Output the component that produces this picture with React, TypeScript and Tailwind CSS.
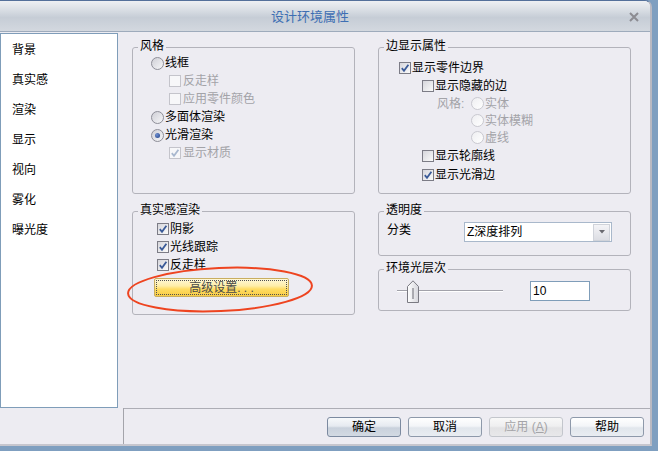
import React from "react";

const BG = "bg-[#edecf2]";

function Radio({ checked = false, disabled = false }: { checked?: boolean; disabled?: boolean }) {
  return (
    <span
      className={
        disabled
          ? "flex h-[13px] w-[13px] shrink-0 items-center justify-center rounded-full border border-[#c9c9d0] bg-[linear-gradient(135deg,#eeeef1,#ffffff)]"
          : "flex h-[13px] w-[13px] shrink-0 items-center justify-center rounded-full border border-[#8e8e98] bg-[linear-gradient(135deg,#cfcfd6,#f6f6f8)]"
      }
    >
      {checked && <span className="h-[5px] w-[5px] rounded-full bg-[radial-gradient(circle_at_35%_35%,#6f8fd0,#1f3f86)]" />}
    </span>
  );
}

function Check({ checked = false, disabled = false }: { checked?: boolean; disabled?: boolean }) {
  return (
    <span
      className={
        disabled
          ? "flex h-[12px] w-[12px] shrink-0 items-center justify-center border border-[#c4c4cb] bg-[#f7f7f9]"
          : "flex h-[12px] w-[12px] shrink-0 items-center justify-center border border-[#7c7c86] bg-[linear-gradient(135deg,#d6d6dc,#fafafa)]"
      }
    >
      {checked && (
        <svg width="10" height="10" viewBox="0 0 10 10">
          <path
            d="M1.8 5.2 L4 7.8 L8.4 1.8"
            fill="none"
            stroke={disabled ? "#a9b8cf" : "#3a5a98"}
            strokeWidth="1.8"
          />
        </svg>
      )}
    </span>
  );
}

function Group({
  title,
  className,
  children,
}: {
  title: string;
  className: string;
  children?: React.ReactNode;
}) {
  return (
    <div className={`relative rounded-[3px] border border-[#b3b3bb] ${className}`}>
      <span className={`absolute left-[5px] top-[-10px] px-[2px] leading-[16px] ${BG}`}>{title}</span>
      {children}
    </div>
  );
}

const nav = ["背景", "真实感", "渲染", "显示", "视向", "雾化", "曝光度"];

export default function App() {
  return (
    <div className="relative h-[451px] w-[658px] overflow-hidden bg-[#7f9fc0] font-[family-name:'Liberation_Sans','Noto_Sans_CJK_SC',sans-serif] text-[12px] text-black">
      <div
        className={`flex h-[446px] w-[652px] flex-col overflow-hidden rounded-tr-[7px] border-t border-r-2 border-b-2 border-t-[#54709a] border-r-[#b9b9c2] border-b-[#c6c6ce] ${BG}`}
      >
        {/* title bar */}
        <div className="flex h-[31px] shrink-0 items-center border-b border-[#9eabbc] bg-[linear-gradient(to_bottom,#eef0f3_0%,#d9dee4_30%,#c6cdd6_55%,#d3d8df_100%)] pt-[2px]">
          <div className="flex-1 text-center text-[13px] leading-[16px] text-[#3e6fb3]">设计环境属性</div>
          <div className="flex w-[30px] justify-center pr-[2px]">
            <svg width="10" height="10" viewBox="0 0 10 10">
              <path d="M1 1 L9 9 M9 1 L1 9" stroke="#8c8c92" strokeWidth="2" />
            </svg>
          </div>
        </div>

        {/* body */}
        <div className="flex h-[376px] shrink-0">
          <div className="mt-[1px] h-[375px] w-[118px] shrink-0 border border-[#7f9db9] bg-white pt-[1px]">
            {nav.map((n) => (
              <div key={n} className="h-[30px] pl-[11px] leading-[30px]">
                {n}
              </div>
            ))}
          </div>

          <div className="flex gap-[23px] pl-[14px] pt-[15px]">
            {/* left column */}
            <div className="flex w-[223px] flex-col gap-[17px]">
              <Group title="风格" className="h-[147px] pl-[18px] pt-[6px]">
                <div className="flex h-[18px] items-center gap-[1px]">
                  <Radio />
                  <span>线框</span>
                </div>
                <div className="ml-[18px] flex h-[18px] items-center gap-[2px] text-[#a3a3a8]">
                  <Check disabled />
                  <span>反走样</span>
                </div>
                <div className="ml-[18px] flex h-[18px] items-center gap-[2px] text-[#a3a3a8]">
                  <Check disabled />
                  <span>应用零件颜色</span>
                </div>
                <div className="flex h-[18px] items-center gap-[1px]">
                  <Radio />
                  <span>多面体渲染</span>
                </div>
                <div className="flex h-[18px] items-center gap-[1px]">
                  <Radio checked />
                  <span>光滑渲染</span>
                </div>
                <div className="ml-[18px] flex h-[18px] items-center gap-[2px] text-[#a3a3a8]">
                  <Check checked disabled />
                  <span>显示材质</span>
                </div>
              </Group>

              <Group title="真实感渲染" className="h-[104px] pl-[24px] pt-[8px]">
                <div className="flex h-[18px] items-center gap-[1px]">
                  <Check checked />
                  <span>阴影</span>
                </div>
                <div className="flex h-[18px] items-center gap-[1px]">
                  <Check checked />
                  <span>光线跟踪</span>
                </div>
                <div className="flex h-[18px] items-center gap-[1px]">
                  <Check checked />
                  <span>反走样</span>
                </div>
                <button className="ml-[-3px] mt-[4px] block h-[19px] w-[135px] rounded-[2px] border border-[#c9ae60] bg-[linear-gradient(to_bottom,#fff8d8_0%,#ffeeaa_40%,#ffdc62_60%,#f9cc45_100%)] p-[1px]">
                  <div className="flex h-full w-full items-center justify-center border border-dotted border-[#505050] leading-[14px] text-[#4a4a4a]">
                    高级设置. . .
                  </div>
                </button>
              </Group>
            </div>

            {/* right column */}
            <div className="flex w-[253px] flex-col">
              <Group title="边显示属性" className="h-[147px] pl-[20px] pt-[11px]">
                <div className="flex h-[18px] items-center gap-[1px]">
                  <Check checked />
                  <span>显示零件边界</span>
                </div>
                <div className="ml-[23px] flex h-[18px] items-center gap-[1px]">
                  <Check />
                  <span>显示隐藏的边</span>
                </div>
                <div className="ml-[38px] flex h-[17px] items-center text-[#a3a3a8]">
                  <span className="w-[34px]">风格:</span>
                  <Radio disabled />
                  <span className="ml-[1px]">实体</span>
                </div>
                <div className="ml-[72px] flex h-[17px] items-center gap-[1px] text-[#a3a3a8]">
                  <Radio disabled />
                  <span>实体模糊</span>
                </div>
                <div className="ml-[72px] flex h-[17px] items-center gap-[1px] text-[#a3a3a8]">
                  <Radio disabled />
                  <span>虚线</span>
                </div>
                <div className="ml-[23px] flex h-[19px] items-center gap-[1px]">
                  <Check />
                  <span>显示轮廓线</span>
                </div>
                <div className="ml-[23px] flex h-[19px] items-center gap-[1px]">
                  <Check checked />
                  <span>显示光滑边</span>
                </div>
              </Group>

              <Group title="透明度" className="mt-[17px] flex h-[45px] items-start pl-[8px] pt-[10px]">
                <span className="mt-[1px] w-[77px] leading-[14px]">分类</span>
                <div className="flex h-[20px] w-[148px] items-center border border-[#a9b8cb] bg-white pl-[2px]">
                  <span className="flex-1 leading-[14px]">Z深度排列</span>
                  <span className="mr-[1px] flex h-[17px] w-[17px] items-center justify-center border border-[#d0d3da] bg-[linear-gradient(to_bottom,#f4f4f7,#dcdde3)]">
                    <svg width="6" height="4" viewBox="0 0 6 4">
                      <path d="M0 0 H6 L3 3.5 Z" fill="#6a6a70" />
                    </svg>
                  </span>
                </div>
              </Group>

              <Group title="环境光层次" className="mt-[13px] flex h-[42px] items-center pl-[18px] pt-[2px]">
                <div className="relative flex h-[22px] w-[106px] items-center">
                  <div className="h-[2px] w-full border-t border-b border-t-[#a2a2aa] border-b-white" />
                  <svg className="absolute left-[10px] top-0" width="12" height="23" viewBox="0 0 12 23">
                    <defs>
                      <linearGradient id="th" x1="0" x2="1" y1="0" y2="0">
                        <stop offset="0" stopColor="#ffffff" />
                        <stop offset="1" stopColor="#d6d6dc" />
                      </linearGradient>
                    </defs>
                    <path d="M0.5 22.5 V6.5 L6 0.8 L11.5 6.5 V22.5 Z" fill="url(#th)" stroke="#7a7a82" />
                    <path d="M6 8 V19" stroke="#6a6a72" strokeWidth="1" />
                  </svg>
                </div>
                <div className="ml-[27px] flex h-[20px] w-[60px] items-center border border-[#7f9db9] bg-white pl-[2px] leading-[14px]">
                  10
                </div>
              </Group>
            </div>
          </div>
        </div>

        {/* bottom bar */}
        <div className="flex h-[36px] shrink-0">
          <div className="w-[124px] shrink-0 border-r border-[#a4a4ab]" />
          <div className="flex flex-1 justify-end gap-[7px] border-t border-[#adadb5] pr-[6px] pt-[8px]">
            <button className="flex h-[20px] w-[74px] items-center justify-center rounded-[3px] border border-[#7c8aa0] bg-[linear-gradient(to_bottom,#f7f9fb_0%,#e6eaf0_45%,#c9d1dc_55%,#d3dae3_100%)] leading-[14px]">
              确定
            </button>
            <button className="flex h-[20px] w-[74px] items-center justify-center rounded-[3px] border border-[#8e99aa] bg-[linear-gradient(to_bottom,#ffffff_0%,#f3f5f8_45%,#e1e6ec_55%,#e9edf2_100%)] leading-[14px]">
              取消
            </button>
            <button className="flex h-[20px] w-[74px] items-center justify-center rounded-[3px] border border-[#c3c6cc] bg-[linear-gradient(to_bottom,#f8f8f8_0%,#efeff0_45%,#e2e2e4_55%,#e8e8ea_100%)] leading-[14px] text-[#a4a4a8]">
              应用 (<span className="underline">A</span>)
            </button>
            <button className="flex h-[20px] w-[74px] items-center justify-center rounded-[3px] border border-[#8e99aa] bg-[linear-gradient(to_bottom,#ffffff_0%,#f3f5f8_45%,#e1e6ec_55%,#e9edf2_100%)] leading-[14px]">
              帮助
            </button>
          </div>
        </div>
      </div>

      {/* red annotation ellipse */}
      <svg className="pointer-events-none absolute left-0 top-0" width="658" height="451" viewBox="0 0 658 451">
        <ellipse
          cx="220"
          cy="289.5"
          rx="92"
          ry="21.5"
          transform="rotate(-2.5 220 289.5)"
          fill="none"
          stroke="#ee4420"
          strokeWidth="2"
        />
      </svg>
    </div>
  );
}
